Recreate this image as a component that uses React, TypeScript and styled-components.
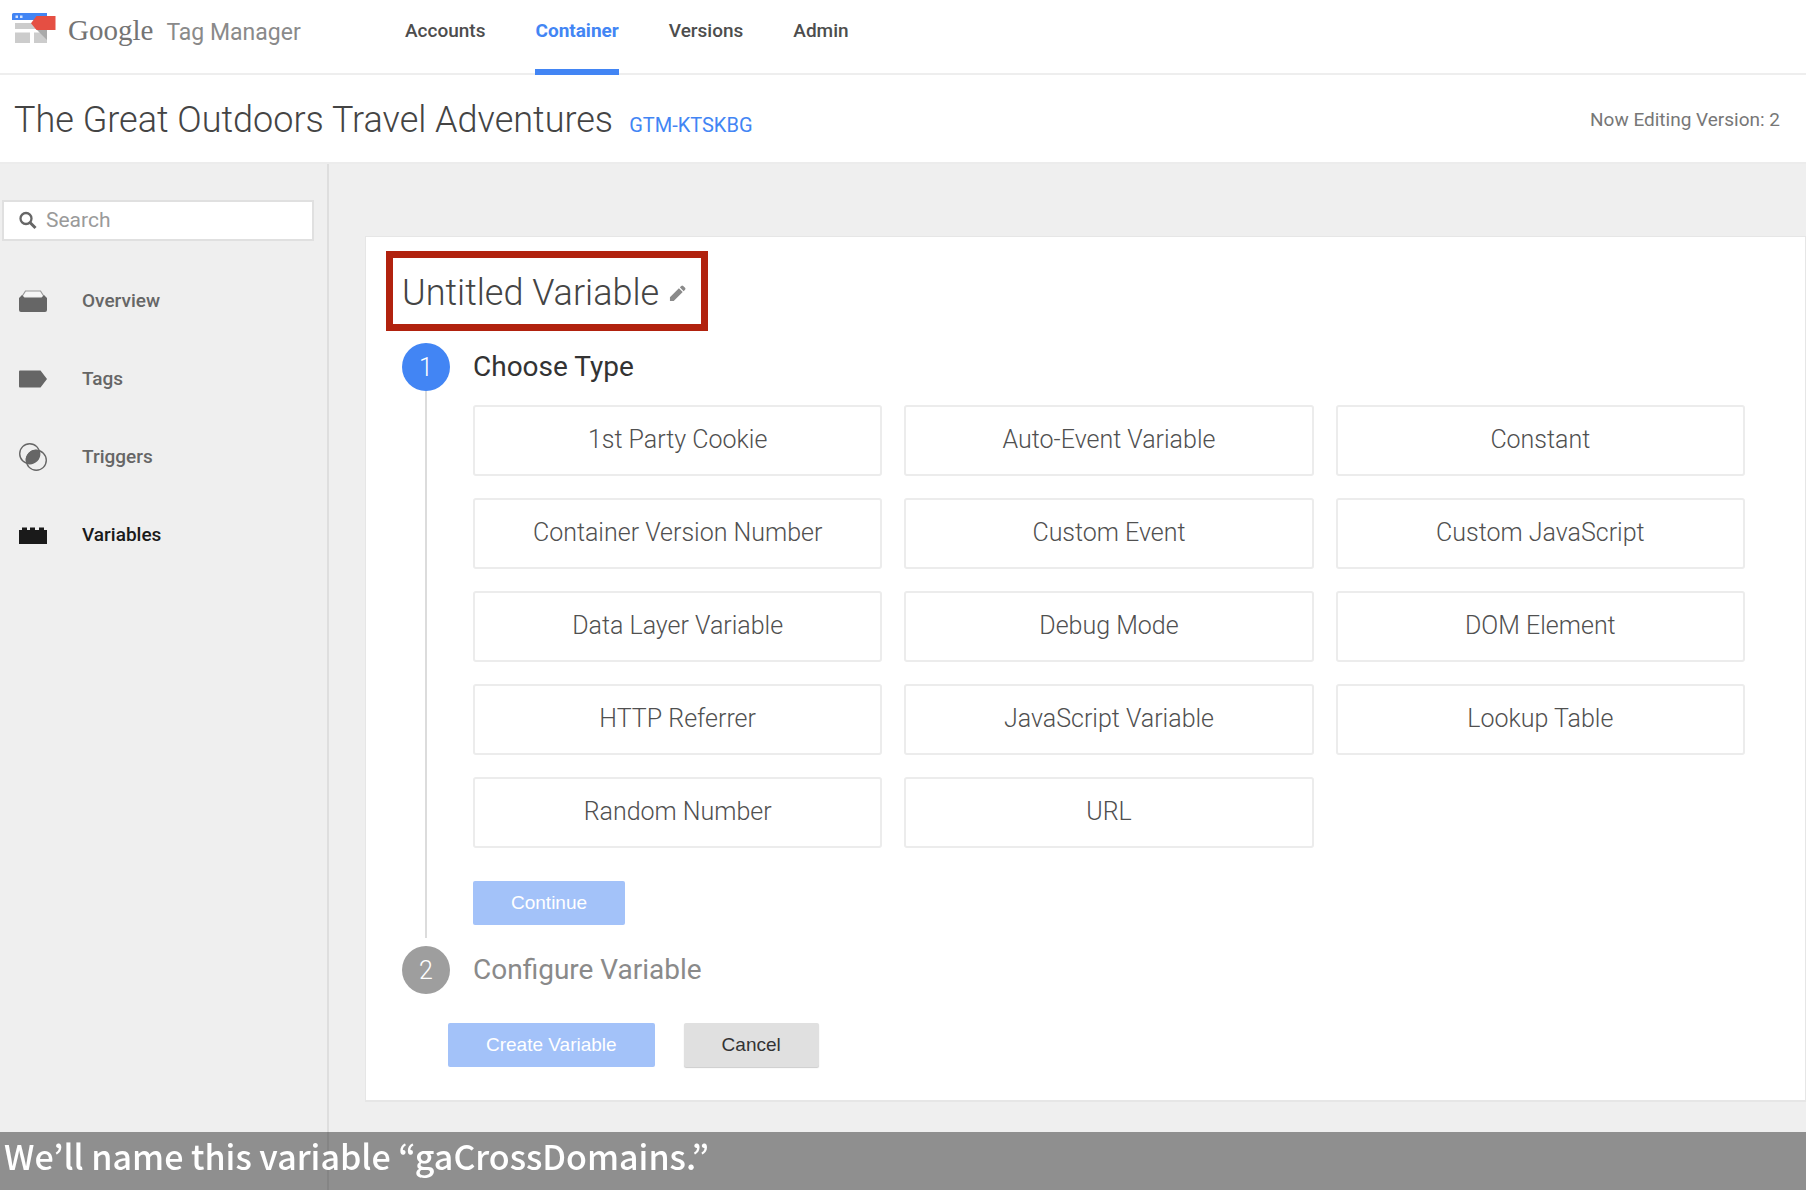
import React from "react";
import styled, { createGlobalStyle } from "styled-components";

const GlobalStyle = createGlobalStyle`
  *, *::before, *::after { box-sizing: border-box; }
  body {
    margin: 0;
    background: #efefef;
    color: #555;
    font-family: Roboto, "Open Sans", sans-serif;
  }
  h1, h2, h3, p, ul, ol { margin: 0; padding: 0; font-weight: 300; }
  ul, ol { list-style: none; }
  button, input { font-family: inherit; }
  a { text-decoration: none; }
`;

const Page = styled.div`
  display: flex;
  flex-direction: column;
  min-height: 100vh;
`;

const TopBar = styled.header`
  display: flex;
  align-items: stretch;
  height: 75px;
  padding-left: 12px;
  background: #fff;
  border-bottom: 2px solid #eee;
`;

const Brand = styled.a`
  display: flex;
  align-items: baseline;
  width: 393px;
  padding-top: 12px;
`;

const BrandMark = styled.svg`
  width: 44px;
  height: 32px;
  margin-right: 12px;
  align-self: flex-start;
`;

const BrandName = styled.span`
  margin-right: 13px;
  font: 29px/36px "Liberation Serif", serif;
  color: #747474;
`;

const ProductName = styled.span`
  font-size: 23px;
  font-weight: 400;
  line-height: 36px;
  color: #8a8a8a;
`;

const TopNav = styled.nav`
  display: flex;
  gap: 50px;
  margin-bottom: -2px;
`;

const TopLink = styled.a<{ $active?: boolean }>`
  padding-top: 18px;
  border-bottom: 6px solid ${(p) => (p.$active ? "#4285f4" : "transparent")};
  color: ${(p) => (p.$active ? "#4285f4" : "#4d4d4d")};
  font-size: 19px;
  font-weight: ${(p) => (p.$active ? 700 : 500)};
  line-height: 26px;
`;

const TitleBar = styled.div`
  display: flex;
  align-items: center;
  justify-content: space-between;
  height: 89px;
  padding: 2px 26px 0 14px;
  background: #fff;
  border-bottom: 2px solid #ececec;
`;

const TitleGroup = styled.div`
  display: flex;
  align-items: baseline;
  gap: 16px;
`;

const PageTitle = styled.h1`
  font-size: 36px;
  line-height: 44px;
  color: #444;
`;

const ContainerId = styled.a`
  color: #4285f4;
  font-size: 20px;
  line-height: 26px;
`;

const VersionNote = styled.p`
  font-size: 19px;
  font-weight: 400;
  line-height: 26px;
  color: #777;
`;

const Body = styled.div`
  display: flex;
  flex: 1;
`;

const Sidebar = styled.aside`
  flex: 0 0 329px;
  min-width: 0;
  padding: 36px 13px 0 2px;
  border-right: 2px solid #dedede;
`;

const SearchBox = styled.label`
  display: flex;
  align-items: center;
  gap: 8px;
  height: 41px;
  padding: 0 14px 2px;
  background: #fff;
  border: 2px solid #e0e0e0;
`;

const SearchGlyph = styled.svg`
  flex: none;
  width: 20px;
  height: 20px;
`;

const SearchInput = styled.input`
  flex: 1;
  min-width: 0;
  padding: 0;
  border: 0;
  outline: 0;
  background: none;
  font-size: 21px;
  line-height: 26px;
  color: #555;
  &::placeholder { color: #9a9a9a; opacity: 1; }
`;

const SideList = styled.ul`
  display: grid;
  gap: 32px;
  padding: 37px 0 0 17px;
`;

const SideLink = styled.a<{ $active?: boolean }>`
  display: flex;
  align-items: center;
  gap: 35px;
  height: 46px;
  color: ${(p) => (p.$active ? "#1a1a1a" : "#666")};
  font-size: 19px;
  font-weight: 500;
  line-height: 26px;
`;

const SideIcon = styled.svg`
  width: 28px;
  height: 28px;
`;

const Main = styled.main`
  flex: 1;
  min-width: 0;
  padding: 72px 0 88px 36px;
`;

const Panel = styled.section`
  padding: 14px 60px 33px 20px;
  background: #fff;
  border: 1px solid #e6e6e6;
  border-bottom-width: 2px;
`;

const NameBox = styled.div`
  display: inline-flex;
  align-items: center;
  gap: 10px;
  height: 80px;
  padding: 4px 15px 0 9px;
  border: 7px solid #b1220e;
`;

const VariableName = styled.h2`
  font-size: 36px;
  line-height: 44px;
  color: #444;
`;

const EditButton = styled.button`
  display: flex;
  padding: 0;
  border: 0;
  background: none;
  cursor: pointer;
`;

const Steps = styled.ol`
  padding: 12px 0 0 16px;
`;

const Step = styled.li`
  display: grid;
  grid-template-columns: 48px 1fr;
  column-gap: 23px;
`;

const Rail = styled.div`
  display: flex;
  flex-direction: column;
  align-items: center;
  padding-bottom: 8px;
`;

const StepBody = styled.div`
  padding-bottom: 21px;
`;

const StepNumber = styled.span<{ $active?: boolean }>`
  display: flex;
  align-items: center;
  justify-content: center;
  width: 48px;
  height: 48px;
  border-radius: 50%;
  background: ${(p) => (p.$active ? "#4285f4" : "#9e9e9e")};
  color: #fff;
  font-size: 25px;
  font-weight: 300;
`;

const RailLine = styled.div`
  flex: 1;
  width: 2px;
  background: #dcdcdc;
`;

const StepTitle = styled.h3<{ $active?: boolean }>`
  font-size: 28px;
  line-height: 48px;
  font-weight: 400;
  color: ${(p) => (p.$active ? "#333" : "#8a8a8a")};
`;

const TypeGrid = styled.div`
  display: grid;
  grid-template-columns: repeat(3, 1fr);
  gap: 22px;
  padding: 14px 0 33px;
`;

const TypeButton = styled.button`
  height: 71px;
  padding: 0 8px 2px;
  border: 2px solid #ececec;
  border-radius: 3px;
  background: #fff;
  color: #505050;
  font-size: 25px;
  font-weight: 300;
  cursor: pointer;
`;

const ActionButton = styled.button<{ $plain?: boolean }>`
  height: 44px;
  padding: 0 38px;
  border: 0;
  border-radius: 2px;
  background: ${(p) => (p.$plain ? "#e0e0e0" : "#a3c2f9")};
  box-shadow: ${(p) => (p.$plain ? "0 1px 1px #ccc" : "none")};
  color: ${(p) => (p.$plain ? "#333" : "#fff")};
  font: 400 19px/26px "Liberation Sans", Arial, sans-serif;
`;

const Footer = styled.div`
  display: flex;
  gap: 29px;
  padding: 29px 0 0 62px;
`;

const Caption = styled.p`
  position: fixed;
  inset: auto 0 0 0;
  height: 58px;
  padding-left: 4px;
  background: rgba(0, 0, 0, 0.4);
  color: #fff;
  font: 500 34px/48px "Noto Sans CJK KR", "Noto Sans", sans-serif;
`;

const topLinks = ["Accounts", "Container", "Versions", "Admin"];

const types = [
  "1st Party Cookie", "Auto-Event Variable", "Constant",
  "Container Version Number", "Custom Event", "Custom JavaScript",
  "Data Layer Variable", "Debug Mode", "DOM Element",
  "HTTP Referrer", "JavaScript Variable", "Lookup Table",
  "Random Number", "URL",
];

const sideItems = [
  {
    label: "Overview",
    icon: (
      <>
        <path d="M3 9.500 6.500 4h15L25 9.500" fill="#f6f6f6" stroke="#999" strokeWidth="1.200" />
        <path d="M0 11 3 8l2.500 2.500h17L25 8l3 3V23a2 2 0 0 1-2 2H2a2 2 0 0 1-2-2Z" fill="currentColor" />
      </>
    ),
  },
  {
    label: "Tags",
    icon: <path d="M1 5.500h20.500L28 14l-6.500 8.500H1a1 1 0 0 1-1-1v-15a1 1 0 0 1 1-1Z" fill="currentColor" />,
  },
  {
    label: "Triggers",
    icon: (
      <>
        <circle cx="10.700" cy="10.700" r="10" fill="none" stroke="currentColor" strokeWidth="1.400" />
        <circle cx="17.300" cy="17.300" r="10" fill="none" stroke="currentColor" strokeWidth="1.400" />
        <path d="M7.400 20.100A10 10 0 0 1 20.100 7.400 10 10 0 0 1 7.400 20.100Z" fill="currentColor" />
      </>
    ),
  },
  {
    label: "Variables",
    active: true,
    icon: <path d="M0 9h3V6.500h5V9h3V6.500h5V9h4V6.500h5V9h3v14H0Z" fill="currentColor" />,
  },
];

export default function App() {
  return (
    <Page>
      <GlobalStyle />
      <TopBar>
        <Brand href="#">
          <BrandMark viewBox="0 0 44 32" aria-hidden="true">
            <path d="M1.500 1H35v7H0V2.500A1.500 1.500 0 0 1 1.500 1Z" fill="#4285f4" />
            <path d="M3.500 3.500h2.500v2.500H3.500ZM8 3.500h2.500v2.500H8Z" fill="#d5e4ff" />
            <path d="M3 11h32v6H3ZM3 20.500h15V31H3ZM22 20.500h13V31H22Z" fill="#ccc" />
            <path d="M25 18h10v10Z" fill="#aaa" />
            <path d="M19 11.200 24.500 4H43.500v14H24.500Z" fill="#e54f43" />
          </BrandMark>
          <BrandName>Google</BrandName>
          <ProductName>Tag Manager</ProductName>
        </Brand>
        <TopNav>
          {topLinks.map((label) => (
            <TopLink key={label} href="#" $active={label === "Container"}>
              {label}
            </TopLink>
          ))}
        </TopNav>
      </TopBar>
      <TitleBar>
        <TitleGroup>
          <PageTitle>The Great Outdoors Travel Adventures</PageTitle>
          <ContainerId href="#">GTM-KTSKBG</ContainerId>
        </TitleGroup>
        <VersionNote>Now Editing Version: 2</VersionNote>
      </TitleBar>
      <Body>
        <Sidebar>
          <SearchBox>
            <SearchGlyph viewBox="0 0 20 20" aria-hidden="true">
              <circle cx="8" cy="8.500" r="5.500" fill="none" stroke="#666" strokeWidth="2.300" />
              <path d="m12 12.500 5.500 5.500" stroke="#666" strokeWidth="3" />
            </SearchGlyph>
            <SearchInput type="text" placeholder="Search" aria-label="Search" />
          </SearchBox>
          <SideList>
            {sideItems.map((item) => (
              <li key={item.label}>
                <SideLink href="#" $active={item.active}>
                  <SideIcon viewBox="0 0 28 28" aria-hidden="true">{item.icon}</SideIcon>
                  {item.label}
                </SideLink>
              </li>
            ))}
          </SideList>
        </Sidebar>
        <Main>
          <Panel>
            <NameBox>
              <VariableName>Untitled Variable</VariableName>
              <EditButton aria-label="Edit name">
                <svg width="17" height="17" viewBox="0 0 18 18" aria-hidden="true">
                  <path d="M1 17v-4L10.500 3.500l4 4L5 17ZM11.500 2.500 13 1q1-1 2 0l2 2q1 1 0 2l-1.500 1.500Z" fill="#8a8a8a" />
                </svg>
              </EditButton>
            </NameBox>
            <Steps>
              <Step>
                <Rail>
                  <StepNumber $active>1</StepNumber>
                  <RailLine />
                </Rail>
                <StepBody>
                  <StepTitle $active>Choose Type</StepTitle>
                  <TypeGrid>
                    {types.map((type) => (
                      <TypeButton key={type}>{type}</TypeButton>
                    ))}
                  </TypeGrid>
                  <ActionButton>Continue</ActionButton>
                </StepBody>
              </Step>
              <Step>
                <StepNumber>2</StepNumber>
                <StepTitle>Configure Variable</StepTitle>
              </Step>
            </Steps>
            <Footer>
              <ActionButton>Create Variable</ActionButton>
              <ActionButton $plain>Cancel</ActionButton>
            </Footer>
          </Panel>
        </Main>
      </Body>
      <Caption>We’ll name this variable “gaCrossDomains.”</Caption>
    </Page>
  );
}
